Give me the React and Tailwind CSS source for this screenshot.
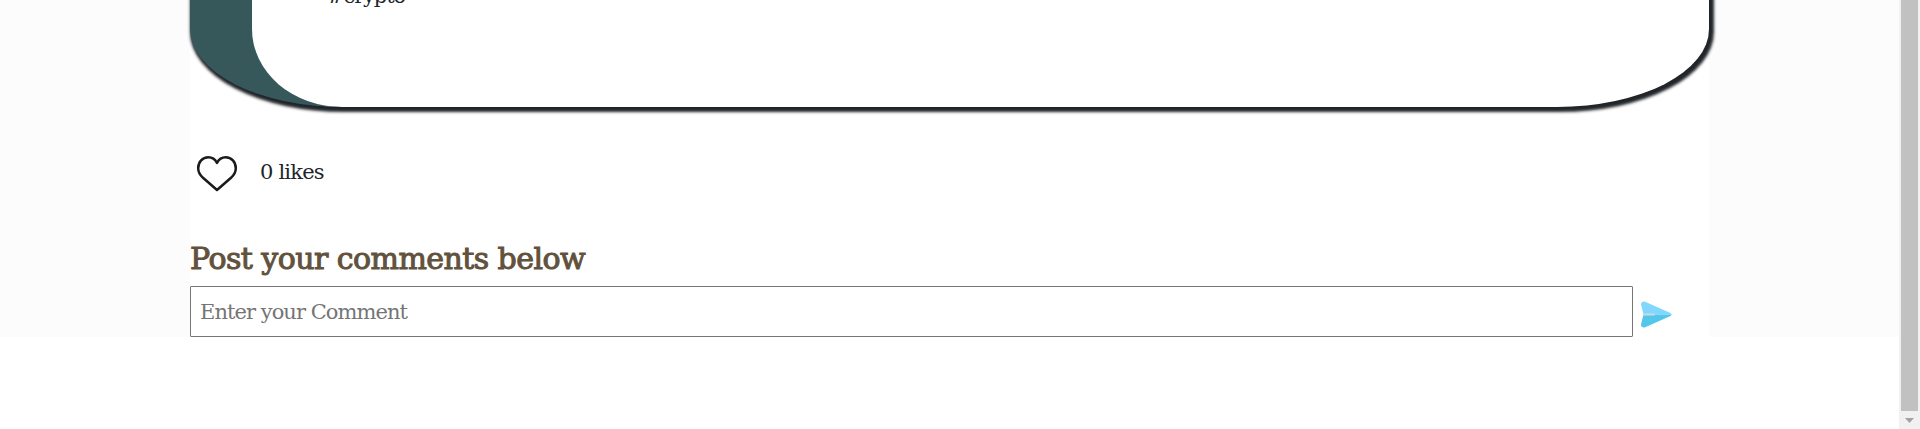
const serif = "font-['DejaVu_Serif',serif]";

function HeartIcon() {
  return (
    <svg width="42" height="38" viewBox="0 0 42 38" fill="none" stroke="#1b1b1d" strokeWidth="2.5" strokeLinejoin="round">
      <path d="M21 35 L7 22.8 C4 20 2.2 17.2 2.2 13.2 C2.2 7 6.6 2.3 12.2 2.3 C16.2 2.3 19.2 4.4 21 8 C22.8 4.4 25.8 2.3 29.8 2.3 C35.4 2.3 39.8 7 39.8 13.2 C39.8 17.2 38 20 35 22.8 Z" />
    </svg>
  );
}

function SendIcon() {
  return (
    <svg width="31" height="27" viewBox="0 0 31 27">
      <path d="M0 3.5 C0 1 2 0 4.2 .7 L29.5 12 Q30.6 12.7 30.5 13.5 H2.5 Z" fill="#81d7fd" />
      <path d="M2.5 13.5 H30.5 Q30.6 14.3 29.5 15 L4.2 26.2 C2 27 0 26 0 23.5 Z" fill="#54c6ec" />
      <path d="M2.2 12.4 H13 Q14 12.4 14 13.4 T13 14.4 H2.2 Z" fill="#c8dce6" />
    </svg>
  );
}

function Scrollbar() {
  return (
    <div className="flex w-[21px] shrink-0 flex-col items-center bg-[#f1f1f1]">
      <div className="h-[411px] w-[17px] bg-[#c1c1c1]" />
      <svg className="mt-[7px]" width="9" height="5" viewBox="0 0 9 5">
        <path d="M0 0h9L4.5 5z" fill="#a3a3a3" />
      </svg>
    </div>
  );
}

export default function App() {
  return (
    <div className={`flex h-[429px] w-full overflow-hidden bg-white ${serif}`}>
      <div className="flex h-[337px] min-w-0 flex-1 bg-[#fcfcfc] pl-[190px]">
        <main className="w-[1519px] bg-white">
          <article className="-mt-[200px] h-[307px] rounded-[152px/78px] border-l-[62px] border-[#36585a] bg-white pt-[184px] pl-[75px] text-[21px] leading-[24px] tracking-[-1.1px] text-[#212529] shadow-[2.5px_2.5px_3px_2px_#212529]">
            #crypto
          </article>
          <div className="flex h-[129px] pt-[48px] pl-[6px]">
            <HeartIcon />
            <p className="ml-[22px] text-[21px] leading-[34px] tracking-[-0.8px] text-[#212529]">0 likes</p>
          </div>
          <h2 className="h-[50px] whitespace-nowrap text-[30px] leading-[46px] font-normal tracking-[-0.55px] text-[#61513d] [-webkit-text-stroke:1px_#61513d]">
            Post your comments below
          </h2>
          <div className="flex">
            <input
              className="h-[51px] w-[1443px] rounded-[1px] border border-[#767676] bg-white px-[9px] text-[21px] tracking-[-0.95px] placeholder:text-[#757575]"
              placeholder="Enter your Comment"
            />
            <button className="ml-[8px] h-[42px] pt-[15px]" aria-label="Send">
              <SendIcon />
            </button>
          </div>
        </main>
      </div>
      <Scrollbar />
    </div>
  );
}
